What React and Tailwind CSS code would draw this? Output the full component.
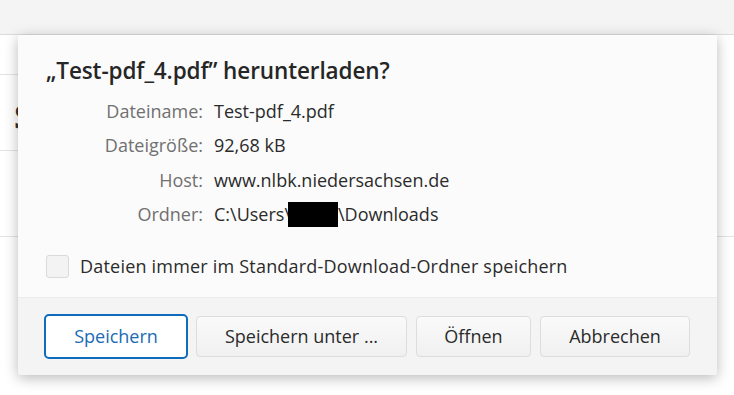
import React from 'react';

const rows = [
  ['Dateiname:', 'Test-pdf_4.pdf'],
  ['Dateigröße:', '92,68 kB'],
  ['Host:', 'www.nlbk.niedersachsen.de'],
];

export default function App() {
  return (
    <div
      className="relative w-[734px] h-[395px] overflow-hidden bg-white"
      style={{ fontFamily: '"Open Sans", "Noto Sans", sans-serif' }}
    >
      {/* page behind the dialog */}
      <div className="h-[35px] bg-[#f4f4f4] border-b border-[#dcdcdc]" />
      <div className="h-[40px] border-b border-[#e3e3e3] w-[200px]" />
      <div className="h-[76px] border-b border-[#e3e3e3] w-[200px] pl-[14px] pt-[24px] text-[34px] font-bold text-[#333] leading-none">
        S
      </div>
      <div className="h-[86px] border-b border-[#e3e3e3]" />

      {/* dialog */}
      <div className="absolute left-[18px] top-[35px] w-[699px] h-[340px] flex flex-col bg-[#fbfbfb] rounded-b-[3px] shadow-[0_3px_14px_rgba(0,0,0,0.28)]">
        <div className="flex-1 pl-[28px] pr-[28px]">
          <h1 className="mt-[21px] text-[22.5px] font-semibold text-[#262626] leading-[30px] tracking-[-0.1px]">
            „Test-pdf_4.pdf” herunterladen?
          </h1>
          <div className="mt-[8px] grid grid-cols-[157px_1fr] gap-x-[11px] text-[18px] leading-[34.3px]">
            {rows.map(([k, v]) => (
              <React.Fragment key={k}>
                <div className="text-right text-[#707070]">{k}</div>
                <div className="text-[#2b2b2b]">{v}</div>
              </React.Fragment>
            ))}
            <div className="text-right text-[#707070]">Ordner:</div>
            <div className="text-[#2b2b2b] flex items-center">
              <span>C:\Users\</span>
              <span className="inline-block w-[50px] h-[25px] bg-black -ml-[3px]" />
              <span>\Downloads</span>
            </div>
          </div>
          <label className="mt-[22px] flex items-center gap-[11px] text-[18px] tracking-[0.2px] text-[#2b2b2b]">
            <span className="w-[23px] h-[23px] rounded-[3px] border border-[#dadada] bg-[#f3f3f3]" />
            Dateien immer im Standard-Download-Ordner speichern
          </label>
        </div>

        <div className="h-[78px] shrink-0 border-t border-[#ececec] bg-[#f4f4f4] rounded-b-[3px] flex items-center pl-[26px] text-[18px]">
          <button className="w-[144px] h-[45px] rounded-[5px] border-[2px] border-[#0f6cbd] bg-white text-[#1a6bb3]">
            Speichern
          </button>
          <button className="ml-[8px] w-[211px] h-[41px] rounded-[4px] border border-[#dddddd] bg-gradient-to-b from-[#fafafa] to-[#f0f0f0] text-[#2b2b2b]">
            Speichern unter ...
          </button>
          <button className="ml-[9px] w-[115px] h-[41px] rounded-[4px] border border-[#dddddd] bg-gradient-to-b from-[#fafafa] to-[#f0f0f0] text-[#2b2b2b]">
            Öffnen
          </button>
          <button className="ml-[9px] w-[150px] h-[41px] rounded-[4px] border border-[#dddddd] bg-gradient-to-b from-[#fafafa] to-[#f0f0f0] text-[#2b2b2b]">
            Abbrechen
          </button>
        </div>
      </div>
    </div>
  );
}
